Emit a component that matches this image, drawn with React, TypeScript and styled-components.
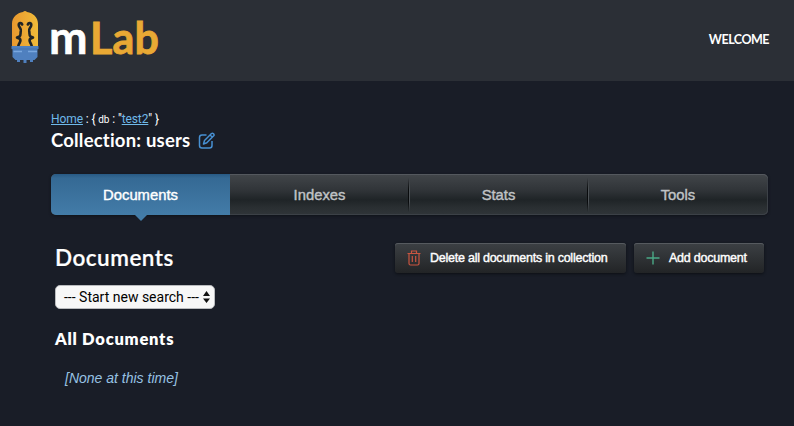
import React from 'react';
import styled, { createGlobalStyle } from 'styled-components';

const GlobalStyle = createGlobalStyle`
  * { box-sizing: border-box; }
  html, body { margin: 0; background: #191d27; }
  body { color: #fff; font-family: "Liberation Sans", Arial, sans-serif; font-variant-ligatures: none; overflow: hidden; }
`;

const Page = styled.div`
  width: 794px;
  height: 426px;
  background: #191d27;
`;

const Header = styled.header`
  display: flex;
  justify-content: space-between;
  height: 81px;
  padding: 10px 25px 0 11px;
  background: #2b2f36;
`;

const Brand = styled.div`
  display: flex;
  gap: 9px;
`;

const Wordmark = styled.div`
  display: flex;
  align-items: baseline;
  gap: 3px;
  margin-top: 1px;
  font: 700 43px/52px Lato, sans-serif;
  color: #fff;
  white-space: nowrap;
`;

const WordInitial = styled.span`
  font-size: 46px;
  letter-spacing: -0.5px;
  -webkit-text-stroke: 0.6px currentColor;
`;

const WordAccent = styled.span`
  color: #e9a934;
  letter-spacing: 0.1px;
  -webkit-text-stroke: 0.8px currentColor;
`;

const Welcome = styled.div`
  margin-top: 21px;
  font: 700 12.5px/18px Lato, sans-serif;
  letter-spacing: -0.5px;
`;

const Main = styled.main`
  padding: 29px 26px 0 51px;
`;

const Breadcrumb = styled.nav`
  height: 18px;
  font: 400 12px/18px Roboto, sans-serif;
  letter-spacing: -0.1px;
  white-space: pre;
`;

const Link = styled.a`
  color: #6fb9ea;
  text-decoration: underline;
`;

const Small = styled.span`
  font-size: 10px;
`;

const Title = styled.h1`
  display: flex;
  align-items: center;
  gap: 8px;
  height: 26px;
  margin: 0;
  padding-bottom: 1px;
  font: 700 18.5px/25px Lato, sans-serif;
  letter-spacing: 0.2px;
`;

const Tabs = styled.div`
  display: grid;
  grid-template-columns: 179px 179px 179px 180px;
  height: 41px;
  margin-top: 20px;
  border-radius: 5px;
  background: linear-gradient(#42464a, #303438 40%, #1f2427 63%, #292e31 80%, #303539);
  box-shadow: inset 0 1px #54585e, inset 0 -1px #3c4147, inset -1px 0 #3c4147, 0 1px 3px #10131a;
`;

const Tab = styled.div<{ $active?: boolean; $divider?: boolean }>`
  position: relative;
  display: flex;
  align-items: center;
  justify-content: center;
  padding-top: 1px;
  border-radius: ${p => (p.$active ? '5px 0 0 5px' : '0')};
  background: ${p => (p.$active ? 'linear-gradient(#285a84, #356994 10%, #437ca8)' : 'none')};
  color: ${p => (p.$active ? '#fff' : '#c0c3c6')};
  font-size: 14.8px;
  -webkit-text-stroke: 0.4px currentColor;
  &::before {
    content: '';
    display: ${p => (p.$divider ? 'block' : 'none')};
    position: absolute;
    left: -1px;
    top: 4px;
    width: 2px;
    height: 34px;
    background: linear-gradient(90deg, #090b0d 50%, #4d5256 50%);
    mask-image: linear-gradient(transparent, #000 35%, #000 70%, transparent);
  }
  &::after {
    content: '';
    display: ${p => (p.$active ? 'block' : 'none')};
    position: absolute;
    left: 84px;
    top: 41px;
    border: 6px solid transparent;
    border-top-color: #437ca8;
    border-bottom: 0;
  }
`;

const Content = styled.section`
  padding: 28px 4px 0;
`;

const Toolbar = styled.div`
  display: flex;
  justify-content: space-between;
  height: 30px;
`;

const Heading = styled.h2`
  margin: 0;
  font: 600 22.5px/29px Lato, sans-serif;
  letter-spacing: 0.5px;
  -webkit-text-stroke: 0.2px currentColor;
`;

const Actions = styled.div`
  display: flex;
  gap: 8px;
`;

const Button = styled.button<{ $width: number }>`
  display: flex;
  align-items: center;
  gap: 9px;
  width: ${p => p.$width}px;
  height: 30px;
  padding: 0 0 0 12px;
  border: 0;
  border-radius: 3px;
  background: linear-gradient(#3c4044, #222426);
  box-shadow: inset 0 1px #565a5f, 0 1px 3px #0d0f14;
  color: #fff;
  font: 400 12.5px "Liberation Sans", Arial, sans-serif;
  letter-spacing: -0.24px;
  -webkit-text-stroke: 0.4px currentColor;
  white-space: nowrap;
`;

const Select = styled.div`
  display: flex;
  align-items: center;
  justify-content: space-between;
  width: 160px;
  height: 24px;
  margin-top: 12px;
  padding: 0 4px 0 8px;
  border: 1px solid #b9bbbe;
  border-radius: 5px;
  background: #f7f7f7;
  color: #000;
  font: 400 14px/22px Roboto, sans-serif;
  white-space: nowrap;
`;

const Dash = styled.span`
  letter-spacing: 0;
`;

const Subheading = styled.h3`
  margin: 20px 0 0;
  font: 800 16.5px/20px Lato, sans-serif;
  letter-spacing: 0.75px;
`;

const Empty = styled.p`
  margin: 19px 0 0 10px;
  color: #97c2e3;
  font: italic 400 14px/20px "Liberation Sans", Arial, sans-serif;
`;

const Svg = styled.svg`
  display: block;
  flex: none;
`;

const Logo = () => (
  <Svg width="29" height="54" viewBox="0 0 29 54">
    <defs>
      <linearGradient id="bulb"><stop stopColor="#e9982f" /><stop offset="1" stopColor="#f0bb39" /></linearGradient>
    </defs>
    <path d="M1 37V14C1 7 6 3 12 2Q14 0 16 2C22 3 27 7 27 14V37Z" fill="url(#bulb)" />
    <path d="M11.200 14.500C10.500 12.500 7.200 12.500 7.800 15.500C8.200 17.500 10.300 18.500 9.800 21C9.200 23 10.200 25 8.500 26.500L6 27.500L8.700 28.800C11 31 8 32.500 7.300 36M16.800 14.500C17.500 12.500 20.800 12.500 20.200 15.500C19.800 17.500 17.700 18.500 18.200 21C18.800 23 17.800 25 19.500 26.500L22 27.500L19.300 28.800C17 31 20 32.500 20.700 36" fill="none" stroke="#1f2427" strokeWidth="2.600" strokeLinecap="round" strokeLinejoin="round" />
    <path d="M0.500 36H27.500V39H26.500V47L23.500 50H22V52H19V50H15.500V53H12.500V50H9V52H6V50H4.500L1.500 47V39H0.500Z" fill="#4f80bf" />
    <path d="M1.500 39H26.500" stroke="#426fa9" strokeWidth=".8" />
    <path d="M2.500 41.500H11M17 41.500H26" stroke="#79a7df" strokeWidth="1.300" />
  </Svg>
);

const EditIcon = () => (
  <Svg width="18" height="18" viewBox="0 0 18 18" fill="none" stroke="#4790d2" strokeWidth="1.5" strokeLinejoin="round">
    <path d="M8.500 3H4Q1.500 3 1.500 5.500V13.500Q1.500 16 4 16H11.500Q14 16 14 13.500V9" />
    <path d="M5.500 12L6.500 8.500L13.500 1.500Q14.500 .8 15.500 1.800Q16.500 2.800 15.700 3.800L8.800 10.800Z M12 3L14.500 5.300" />
  </Svg>
);

const TrashIcon = () => (
  <Svg width="14" height="16" viewBox="0 0 14 16" fill="none" stroke="#c95540" strokeWidth="1.2">
    <path d="M.500 3.500H13.500M4.500 3V1H9.500V3M2 4V13.500Q2 15 3.500 15H10.500Q12 15 12 13.500V4M5.300 6V12M8.700 6V12" />
  </Svg>
);

const PlusIcon = () => (
  <Svg width="14" height="14" viewBox="0 0 14 14" stroke="#4aa986" strokeWidth="1.4">
    <path d="M.500 7H13.500M7 .500V13.500" />
  </Svg>
);

const ArrowsIcon = () => (
  <Svg width="7" height="12" viewBox="0 0 7 12" fill="#111">
    <path d="M0 5L3.500 0L7 5ZM0 7.500H7L3.500 12Z" />
  </Svg>
);

export default function App() {
  return (
    <Page>
      <GlobalStyle />
      <Header>
        <Brand>
          <Logo />
          <Wordmark><WordInitial>m</WordInitial><WordAccent>Lab</WordAccent></Wordmark>
        </Brand>
        <Welcome>WELCOME</Welcome>
      </Header>
      <Main>
        <Breadcrumb>
          <Link>Home</Link>{' : { '}<Small>db</Small>{' : "'}<Link>test2</Link>{'" }'}
        </Breadcrumb>
        <Title>Collection: users <EditIcon /></Title>
        <Tabs>
          <Tab $active>Documents</Tab>
          <Tab>Indexes</Tab>
          <Tab $divider>Stats</Tab>
          <Tab $divider>Tools</Tab>
        </Tabs>
        <Content>
          <Toolbar>
            <Heading>Documents</Heading>
            <Actions>
              <Button $width={231}><TrashIcon />Delete all documents in collection</Button>
              <Button $width={130}><PlusIcon />Add document</Button>
            </Actions>
          </Toolbar>
          <Select>
            <span><Dash>---</Dash> Start new search <Dash>---</Dash></span>
            <ArrowsIcon />
          </Select>
          <Subheading>All Documents</Subheading>
          <Empty>[None at this time]</Empty>
        </Content>
      </Main>
    </Page>
  );
}
